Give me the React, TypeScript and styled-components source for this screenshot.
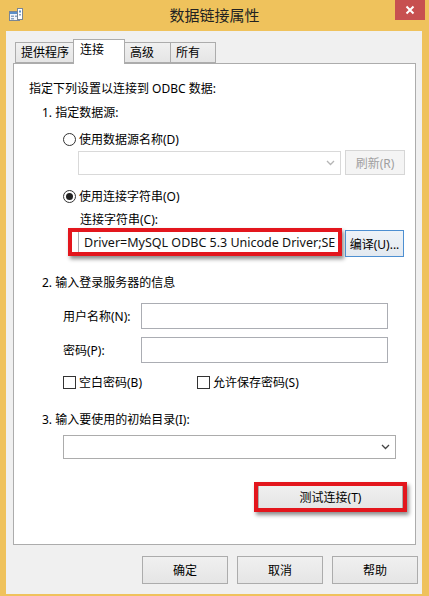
import styled, { createGlobalStyle } from 'styled-components'

const GlobalStyle = createGlobalStyle`
  html, body {
    margin: 0;
    padding: 0;
    background: #efc25c;
  }
  * {
    box-sizing: border-box;
  }
`

const FONT = `"Noto Sans", "Noto Sans CJK SC", sans-serif`

const Window = styled.div`
  width: 429px;
  height: 596px;
  background: #efc25c;
  display: flex;
  flex-direction: column;
  font-family: ${FONT};
  font-size: 12px;
  color: #000;
  overflow: hidden;
`

const TitleBar = styled.div`
  height: 31px;
  display: grid;
  grid-template-columns: 1fr auto 1fr;
  align-items: start;
`

const TitleIcon = styled.div`
  padding: 7px 0 0 8px;
`

const TitleText = styled.div`
  font-family: "Noto Sans CJK SC", sans-serif;
  font-size: 15px;
  line-height: 20px;
  padding-top: 5px;
  color: #222;
`

const CloseBtn = styled.div`
  justify-self: end;
  width: 30px;
  height: 20px;
  margin-right: 4px;
  background: #c75050;
  display: flex;
  align-items: center;
  justify-content: center;
`

const Client = styled.div`
  flex: 1;
  margin: 0 7px 2px 6px;
  background: #f0f0f0;
  display: flex;
  flex-direction: column;
`

const TabStrip = styled.div`
  height: 32px;
  display: flex;
  align-items: flex-end;
  padding-left: 9px;
`

const Tab = styled.div<{ $w: number; $active?: boolean }>`
  width: ${(p) => p.$w}px;
  height: ${(p) => (p.$active ? 25 : 21)}px;
  margin-bottom: ${(p) => (p.$active ? -1 : 0)}px;
  margin-right: -1px;
  border: 1px solid #acacac;
  border-bottom: ${(p) => (p.$active ? 'none' : '1px solid #acacac')};
  background: ${(p) => (p.$active ? '#fff' : 'linear-gradient(#f0f0f0, #e5e5e5)')};
  position: relative;
  z-index: ${(p) => (p.$active ? 2 : 1)};
  padding: ${(p) => (p.$active ? '2px 0 0 6px' : '2px 0 0 5px')};
  line-height: 16px;
  white-space: nowrap;
`

const Panel = styled.div`
  margin-left: 7px;
  width: 403px;
  height: 482px;
  border: 1px solid #acacac;
  background: #fff;
  display: flex;
  flex-direction: column;
  position: relative;
  z-index: 1;
`

const Line = styled.div<{ $indent: number; $top: number }>`
  margin-top: ${(p) => p.$top}px;
  padding-left: ${(p) => p.$indent}px;
  line-height: 16px;
  height: 16px;
  white-space: nowrap;
`

const Row = styled.div<{ $indent: number; $top: number; $h: number }>`
  margin-top: ${(p) => p.$top}px;
  padding-left: ${(p) => p.$indent}px;
  height: ${(p) => p.$h}px;
  display: flex;
  align-items: center;
  white-space: nowrap;
`

const TopRow = styled(Row)`
  align-items: flex-start;
`

const RadioCircle = styled.span<{ $checked?: boolean }>`
  width: 13px;
  height: 13px;
  border-radius: 50%;
  border: 1px solid #333;
  background: #fff;
  display: inline-flex;
  align-items: center;
  justify-content: center;
  margin-right: 3px;

  &::after {
    content: '';
    display: ${(p) => (p.$checked ? 'block' : 'none')};
    width: 7px;
    height: 7px;
    border-radius: 50%;
    background: #222;
  }
`

const CheckBox = styled.span`
  width: 13px;
  height: 13px;
  border: 1px solid #333;
  background: #fff;
  margin-right: 3px;
`

const CheckItem = styled.label<{ $w?: number }>`
  display: flex;
  align-items: center;
  width: ${(p) => (p.$w ? `${p.$w}px` : 'auto')};
`

const Combo = styled.div<{ $w: number; $disabled?: boolean }>`
  width: ${(p) => p.$w}px;
  height: 24px;
  border: 1px solid ${(p) => (p.$disabled ? '#d9d9d9' : '#acacac')};
  background: #fff;
  display: flex;
  align-items: center;
  justify-content: flex-end;
  padding-right: 5px;
  color: ${(p) => (p.$disabled ? '#bdbdbd' : '#333')};
`

const Button = styled.div<{ $w: number; $h: number; $disabled?: boolean; $focus?: boolean }>`
  width: ${(p) => p.$w}px;
  height: ${(p) => p.$h}px;
  border: 1px solid ${(p) => (p.$focus ? '#4d8fd1' : p.$disabled ? '#d6d6d6' : '#acacac')};
  background: ${(p) =>
    p.$disabled ? '#f4f4f4' : p.$focus ? 'linear-gradient(#eef3f8, #e3e9f0)' : 'linear-gradient(#f0f0f0, #e5e5e5)'};
  color: ${(p) => (p.$disabled ? '#a0a0a0' : '#000')};
  display: flex;
  align-items: center;
  justify-content: center;
  position: relative;
  white-space: nowrap;
`

const TextBox = styled.div<{ $w: number; $h: number }>`
  width: ${(p) => p.$w}px;
  height: ${(p) => p.$h}px;
  border: 1px solid #abadb3;
  background: #fff;
  position: relative;
  display: flex;
  align-items: center;
  padding-left: 5px;
  white-space: nowrap;
`

const ConnText = styled.div`
  flex: 1;
  min-width: 0;
  overflow: hidden;
  font-size: 12.5px;
  font-family: "Noto Sans", sans-serif;
  color: #111;
`

/* red annotation frame drawn over the screenshot */
const Mark = styled.span<{ $l: number; $t: number; $r: number; $b: number }>`
  position: absolute;
  left: ${(p) => p.$l}px;
  top: ${(p) => p.$t}px;
  right: ${(p) => p.$r}px;
  bottom: ${(p) => p.$b}px;
  border: 4px solid #e3161d;
  box-shadow: 2px 3px 4px rgba(0, 0, 0, 0.45);
  pointer-events: none;
`

const FieldLabel = styled.span`
  width: 78px;
`

const TestRow = styled.div`
  margin-top: 26px;
  align-self: flex-end;
  margin-right: 12px;
`

const ButtonBar = styled.div`
  display: flex;
  justify-content: flex-end;
  gap: 9px;
  margin-top: 11px;
  padding-right: 4px;
`

const Chevron = ({ color }: { color: string }) => (
  <svg width="9" height="6" viewBox="0 0 9 6">
    <polyline points="1,1 4.5,4.5 8,1" fill="none" stroke={color} strokeWidth="1.3" />
  </svg>
)

const AppIcon = () => (
  <svg width="16" height="16" viewBox="0 0 16 16">
    <rect x="1.5" y="4.5" width="10" height="9" fill="#f4f6fa" stroke="#7a8694" />
    <rect x="2" y="5" width="9" height="2" fill="#5b8fc9" />
    <rect x="3" y="8.5" width="3" height="1.5" fill="#8aa4c4" />
    <rect x="7" y="8.5" width="3" height="1.5" fill="#8aa4c4" />
    <rect x="3" y="11" width="3" height="1.5" fill="#8aa4c4" />
    <rect x="9.5" y="1.5" width="5" height="11" fill="#fff" stroke="#7a8694" />
    <rect x="11" y="3.5" width="2" height="2" fill="#5b8fc9" />
    <rect x="11" y="7" width="2" height="1.5" fill="#8aa4c4" />
  </svg>
)

export default function App() {
  return (
    <>
      <GlobalStyle />
      <Window>
        <TitleBar>
          <TitleIcon>
            <AppIcon />
          </TitleIcon>
          <TitleText>数据链接属性</TitleText>
          <CloseBtn>
            <svg width="10" height="10" viewBox="0 0 10 10">
              <path d="M1.5 1.5 L8.5 8.5 M8.5 1.5 L1.5 8.5" stroke="#fff" strokeWidth="2" />
            </svg>
          </CloseBtn>
        </TitleBar>
        <Client>
          <TabStrip>
            <Tab $w={59}>提供程序</Tab>
            <Tab $w={52} $active>连接</Tab>
            <Tab $w={47}>高级</Tab>
            <Tab $w={46}>所有</Tab>
          </TabStrip>
          <Panel>
            <Line $indent={15} $top={17}>指定下列设置以连接到 ODBC 数据:</Line>
            <Line $indent={28} $top={8}>1. 指定数据源:</Line>
            <Row $indent={49} $top={10} $h={16}>
              <RadioCircle />
              使用数据源名称(D)
            </Row>
            <Row $indent={64} $top={3} $h={25}>
              <Combo $w={263} $disabled>
                <Chevron color="#b5b5b5" />
              </Combo>
              <Button $w={60} $h={25} $disabled style={{ marginLeft: 4 }}>
                刷新(R)
              </Button>
            </Row>
            <Row $indent={49} $top={13} $h={16}>
              <RadioCircle $checked />
              使用连接字符串(O)
            </Row>
            <Line $indent={66} $top={8}>连接字符串(C):</Line>
            <TopRow $indent={64} $top={2} $h={27}>
              <TextBox $w={264} $h={24}>
                <ConnText>Driver=MySQL ODBC 5.3 Unicode Driver;SE</ConnText>
                <Mark $l={-11} $t={-3} $r={-1} $b={-3} />
              </TextBox>
              <Button $w={59} $h={27} $focus style={{ marginLeft: 3 }}>
                编译(U)...
              </Button>
            </TopRow>
            <Line $indent={28} $top={18}>2. 输入登录服务器的信息</Line>
            <Row $indent={49} $top={12} $h={26}>
              <FieldLabel>用户名称(N):</FieldLabel>
              <TextBox $w={247} $h={26} />
            </Row>
            <Row $indent={49} $top={8} $h={26}>
              <FieldLabel>密码(P):</FieldLabel>
              <TextBox $w={247} $h={26} />
            </Row>
            <Row $indent={49} $top={11} $h={16}>
              <CheckItem $w={134}>
                <CheckBox />
                空白密码(B)
              </CheckItem>
              <CheckItem>
                <CheckBox />
                允许保存密码(S)
              </CheckItem>
            </Row>
            <Line $indent={28} $top={22}>3. 输入要使用的初始目录(I):</Line>
            <Row $indent={49} $top={7} $h={24}>
              <Combo $w={333}>
                <Chevron color="#444" />
              </Combo>
            </Row>
            <TestRow>
              <Button $w={145} $h={24}>
                测试连接(T)
                <Mark $l={-5} $t={-4} $r={-5} $b={-4} />
              </Button>
            </TestRow>
          </Panel>
          <ButtonBar>
            <Button $w={86} $h={28}>确定</Button>
            <Button $w={86} $h={28}>取消</Button>
            <Button $w={86} $h={28}>帮助</Button>
          </ButtonBar>
        </Client>
      </Window>
    </>
  )
}
